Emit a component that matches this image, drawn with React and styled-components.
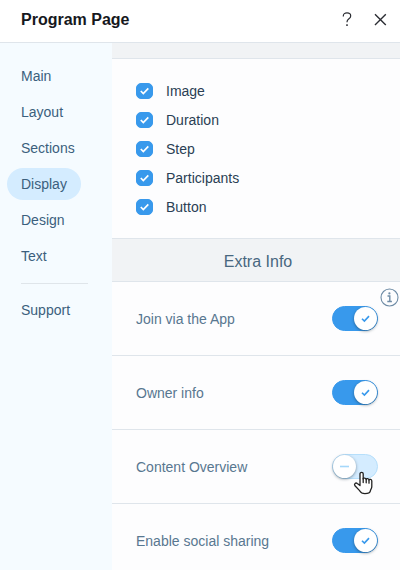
import React, { useState } from "react";
import styled, { createGlobalStyle } from "styled-components";

const GlobalStyle = createGlobalStyle`
  *, *::before, *::after { box-sizing: border-box; }
  body {
    margin: 0;
    background: #fdfdfe;
    font-family: "Liberation Sans", Arial, sans-serif;
  }
`;

const Panel = styled.div`
  display: flex;
  flex-direction: column;
  height: 100vh;
  overflow: hidden;
`;

const Header = styled.header`
  display: flex;
  flex: none;
  align-items: center;
  justify-content: space-between;
  height: 43px;
  padding: 0 12px 3px 21px;
  background: #fff;
  border-bottom: 1px solid #dfe5eb;
`;

const Title = styled.h1`
  margin: 0;
  font-size: 16px;
  line-height: 20px;
  color: #16181d;
`;

const HeaderActions = styled.div`
  display: flex;
  gap: 17px;
`;

const IconButton = styled.button`
  display: flex;
  padding: 0;
  border: 0;
  background: none;
  color: ${({ $color }) => $color || "#2b2d33"};
  cursor: pointer;
`;

const Body = styled.div`
  display: flex;
  flex: 1;
  min-height: 0;
`;

const Sidebar = styled.nav`
  display: flex;
  flex: none;
  flex-direction: column;
  align-items: flex-start;
  gap: 4px;
  width: 112px;
  padding: 17px 7px;
  background: #f5fbff;
`;

const NavLink = styled.a`
  padding: 0 14px;
  border-radius: 16px;
  background: ${({ $active }) => ($active ? "#d4ecff" : "transparent")};
  color: #3b5f7d;
  font-size: 14px;
  line-height: 32px;
  text-decoration: none;
`;

const NavDivider = styled.hr`
  align-self: stretch;
  height: 1px;
  margin: 7px 17px 6px 14px;
  border: 0;
  background: #dfe5ea;
`;

const Content = styled.main`
  flex: 1;
  min-width: 0;
  overflow: hidden;
`;

const SectionStrip = styled.div`
  height: 16px;
  border-bottom: 1px solid #dfe5eb;
  background: #f1f3f5;
`;

const SectionHeading = styled.h2`
  margin: 0;
  padding: 4px 0 0 4px;
  border-bottom: 1px solid #dfe5eb;
  background: #f1f3f5;
  color: #48677f;
  font-size: 16px;
  font-weight: 400;
  line-height: 38px;
  text-align: center;
`;

const CheckList = styled.div`
  display: flex;
  flex-direction: column;
  gap: 13px;
  padding: 24px 24px 23px;
  border-bottom: 1px solid #dfe5eb;
`;

const CheckLabel = styled.label`
  display: flex;
  align-items: center;
  gap: 13px;
  color: #2a3f54;
  font-size: 14px;
  line-height: 16px;
`;

const CheckBox = styled.span`
  display: grid;
  flex: none;
  place-items: center;
  width: 17px;
  height: 16px;

  > * { grid-area: 1 / 1; }
  > svg { pointer-events: none; }
`;

const CheckInput = styled.input`
  width: 100%;
  height: 100%;
  margin: 0;
  appearance: none;
  border: 1px solid #3899ec;
  border-radius: 5px;
  background: #fff;
  cursor: pointer;

  &:checked { background: #3899ec; }
`;

const SettingRow = styled.div`
  position: relative;
  display: flex;
  align-items: center;
  justify-content: space-between;
  height: 74px;
  padding: 0 22px 0 24px;
  border-bottom: 1px solid #dfe5eb;
`;

const SettingLabel = styled.label`
  color: #587790;
  font-size: 14px;
  line-height: 20px;
`;

const Switch = styled.span`
  position: relative;
  display: flex;
  width: 46px;
  height: 25px;
`;

const SwitchInput = styled.input`
  width: 100%;
  height: 100%;
  margin: 0;
  appearance: none;
  border: 1px solid #b6dffb;
  border-radius: 13px;
  background: #d4ecff;
  cursor: pointer;

  &:checked {
    border-color: #3899ec;
    background: #3899ec;
  }
`;

const Knob = styled.span`
  position: absolute;
  top: 1px;
  ${({ $on }) => ($on ? "right: 1px;" : "left: 1px;")}
  display: grid;
  place-items: center;
  width: 23px;
  height: 23px;
  border-radius: 50%;
  background: #fff;
  box-shadow: 0 1px 3px rgba(22, 45, 61, 0.5);
  color: ${({ $on }) => ($on ? "#3899ec" : "#a5d8fa")};
  pointer-events: none;
`;

const InfoSlot = styled.span`
  position: absolute;
  top: 6px;
  right: 1px;
`;

const PointerSlot = styled.span`
  position: absolute;
  top: 17px;
  left: 21px;
  pointer-events: none;
`;

const navItems = ["Main", "Layout", "Sections", "Display", "Design", "Text"];
const fields = ["Image", "Duration", "Step", "Participants", "Button"];
const settings = [
  { id: "join", label: "Join via the App", on: true, info: true },
  { id: "owner", label: "Owner info", on: true },
  { id: "overview", label: "Content Overview", on: false, pointer: true },
  { id: "sharing", label: "Enable social sharing", on: true },
];

const HelpIcon = () => (
  <svg width="16" height="18" viewBox="0 0 16 18" fill="none" stroke="currentColor" strokeWidth="1.2">
    <path d="M4.3 5.5V4.9C4.3 2.9 5.8 1.9 8 1.9s3.7 1.1 3.7 3c0 2.9-3.7 2.7-3.7 6v.4" />
    <path d="M8 13.2v1.7" strokeWidth="1.5" />
  </svg>
);

const CloseIcon = () => (
  <svg width="16" height="18" viewBox="0 0 16 18" fill="none" stroke="currentColor" strokeWidth="1.4">
    <path d="M3 3.3l10.8 10.6M13.8 3.3L3 13.9" />
  </svg>
);

const InfoIcon = () => (
  <svg width="19" height="19" viewBox="0 0 19 19" fill="none" stroke="currentColor">
    <circle cx="9.5" cy="9.5" r="8.5" strokeWidth="1.1" />
    <path d="M7.5 8h2.3v5.4M7.3 13.5h4.6" strokeWidth="1.4" />
    <circle cx="9.4" cy="5.4" r="1.1" fill="currentColor" stroke="none" />
  </svg>
);

const TickIcon = () => (
  <svg width="11" height="10" viewBox="0 0 11 10" fill="none" stroke="#fff" strokeWidth="1.7">
    <path d="M1.8 5l2.5 2.5L9.3 2.4" />
  </svg>
);

const KnobIcon = ({ on }) => (
  <svg width="13" height="13" viewBox="0 0 13 13" fill="none" stroke="currentColor" strokeWidth="1.6">
    <path d={on ? "M3 6.7l2.4 2.4 4.6-5" : "M2 6.5h9"} />
  </svg>
);

const HandIcon = () => (
  <svg width="21" height="24" viewBox="0 0 21 24" fill="none" stroke="#222" strokeWidth="1.3" strokeLinejoin="round" strokeLinecap="round">
    <path
      fill="#fff"
      d="M7 14.5V2.8C7 .8 10.2.8 10.2 2.8v5.1c.2-1.3 3-1 3 .6 0-1.3 2.8-1 2.8.6.3-1.1 2.8-.9 2.8 1v5.4c0 2.2-1.3 3-1.5 4.6-.3 2-2.2 2.5-5.4 2.5-4 0-4.3-1.2-5.3-3L2 14.8c-1.4-2.1.8-3.5 2.3-2.3z"
    />
    <path d="M10.2 7.5v4M13.2 8.5v3.3M16 9.2v3" />
  </svg>
);

function Setting({ id, label, on, info, pointer }) {
  const [checked, setChecked] = useState(on);
  return (
    <SettingRow>
      <SettingLabel htmlFor={id}>{label}</SettingLabel>
      <Switch>
        <SwitchInput
          id={id}
          type="checkbox"
          role="switch"
          checked={checked}
          onChange={(e) => setChecked(e.target.checked)}
        />
        <Knob $on={checked}>
          <KnobIcon on={checked} />
        </Knob>
        {pointer && (
          <PointerSlot aria-hidden="true">
            <HandIcon />
          </PointerSlot>
        )}
      </Switch>
      {info && (
        <InfoSlot>
          <IconButton type="button" aria-label={`About ${label}`} $color="#6f8ca6">
            <InfoIcon />
          </IconButton>
        </InfoSlot>
      )}
    </SettingRow>
  );
}

export default function App() {
  return (
    <Panel>
      <GlobalStyle />
      <Header>
        <Title>Program Page</Title>
        <HeaderActions>
          <IconButton type="button" aria-label="Help"><HelpIcon /></IconButton>
          <IconButton type="button" aria-label="Close"><CloseIcon /></IconButton>
        </HeaderActions>
      </Header>
      <Body>
        <Sidebar>
          {navItems.map((item) => (
            <NavLink key={item} href={`#${item.toLowerCase()}`} $active={item === "Display"}>
              {item}
            </NavLink>
          ))}
          <NavDivider />
          <NavLink href="#support">Support</NavLink>
        </Sidebar>
        <Content>
          <SectionStrip />
          <CheckList>
            {fields.map((field) => (
              <CheckLabel key={field}>
                <CheckBox>
                  <CheckInput type="checkbox" defaultChecked />
                  <TickIcon />
                </CheckBox>
                {field}
              </CheckLabel>
            ))}
          </CheckList>
          <SectionHeading>Extra Info</SectionHeading>
          {settings.map((setting) => (
            <Setting key={setting.id} {...setting} />
          ))}
        </Content>
      </Body>
    </Panel>
  );
}
